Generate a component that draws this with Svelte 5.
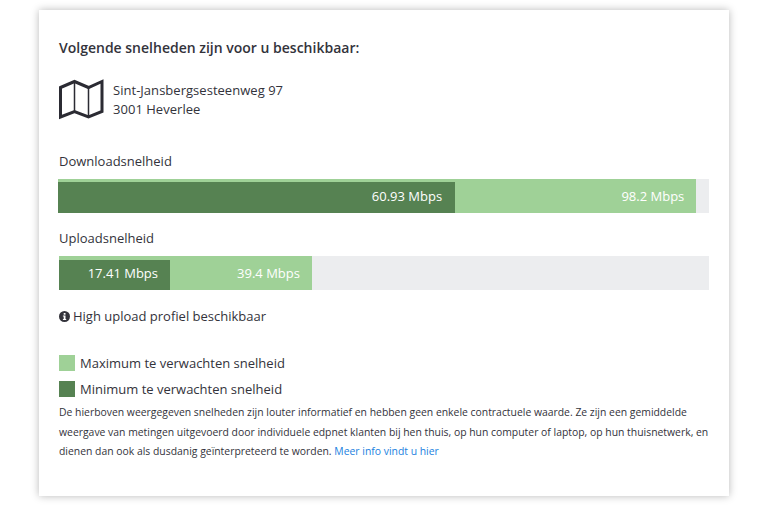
<script>
  const bars = [
    { label: 'Downloadsnelheid', cls: 'dl', max: 98.05, min: 61.0, maxText: '98.2 Mbps', minText: '60.93 Mbps' },
    { label: 'Uploadsnelheid', cls: 'ul', max: 38.92, min: 17.08, maxText: '39.4 Mbps', minText: '17.41 Mbps' }
  ];
</script>

<div class="page">
  <section class="card">
    <h2>Volgende snelheden zijn voor u beschikbaar:</h2>
    <div class="address">
      <svg class="map" width="46" height="42" viewBox="0 0 46 42" fill="none" stroke="#2b2b33" stroke-width="3" stroke-linejoin="miter">
        <path d="M2.500 8.500 L16.500 2.500 L30.500 8.500 L44 2.500 V32.500 L30.500 38 L16.500 32.500 L2.500 38 Z" />
        <path d="M16.500 2.500 V32.500 M30.500 8.500 V38" stroke-width="1.500" />
      </svg>
      <div class="lines">Sint-Jansbergsesteenweg 97<br />3001 Heverlee</div>
    </div>

    {#each bars as b}
      <div class="label {b.cls}">{b.label}</div>
      <div class="track {b.cls}">
        <div class="max" style="width:{b.max}%">
          <span>{b.maxText}</span>
          <div class="min" style="width:{(b.min / b.max) * 100}%"><span>{b.minText}</span></div>
        </div>
      </div>
    {/each}

    <div class="info">
      <svg width="11" height="11" viewBox="0 0 11 11"><circle cx="5.500" cy="5.500" r="5.500" fill="#33333b" /><rect x="4.700" y="2" width="1.800" height="1.700" fill="#fff" /><path d="M3.900 4.500 H6.500 V8 H7.200 V9 H3.900 V8 H4.700 V5.500 H3.900 Z" fill="#fff" /></svg>
      <span>High upload profiel beschikbaar</span>
    </div>

    <div class="legend first"><i class="sw light"></i>Maximum te verwachten snelheid</div>
    <div class="legend"><i class="sw dark"></i>Minimum te verwachten snelheid</div>

    <p class="note">De hierboven weergegeven snelheden zijn louter informatief en hebben geen enkele contractuele waarde. Ze zijn een gemiddelde weergave van metingen uitgevoerd door individuele edpnet klanten bij hen thuis, op hun computer of laptop, op hun thuisnetwerk, en dienen dan ook als dusdanig geïnterpreteerd te worden. <a href="#top">Meer info vindt u hier</a></p>
  </section>
</div>

<style>
  :global(body) { margin: 0; background: #fff; }
  .page { padding: 10px 39px 11px; font-family: "Open Sans", sans-serif; color: #33333b; }
  .card { box-sizing: border-box; height: 486px; padding: 28px 20px 0; background: #fff; box-shadow: 0 0 8px rgba(0,0,0,.28); }
  h2 { margin: 0; font-size: 14px; line-height: 19px; font-weight: 600; }
  .address { display: flex; align-items: center; gap: 9px; margin-top: 22px; }
  .map { display: block; margin-left: -1px; }
  .lines { font-size: 13px; line-height: 19px; letter-spacing: .03px; }
  .label { font-size: 13px; line-height: 18px; }
  .label.dl { margin-top: 31px; }
  .label.ul { margin-top: 16px; }
  .track { height: 34px; margin-top: 9px; background: #ecedef; color: #fff; font-size: 13px; }
  .track.dl { margin-left: -1px; }
  .max { position: relative; box-sizing: border-box; height: 100%; background: #9fd197; display: flex; align-items: center; justify-content: flex-end; padding-right: 12px; }
  .min { position: absolute; left: 0; bottom: 0; box-sizing: border-box; background: #568252; display: flex; align-items: center; justify-content: flex-end; padding-right: 12px; }
  .min span { position: relative; top: -2px; }
  .dl .min { height: 31px; padding-right: 13px; }
  .ul .min { height: 30px; }
  .info { display: flex; align-items: center; gap: 3px; margin-top: 17px; font-size: 13px; line-height: 18px; }
  .legend { display: flex; align-items: center; gap: 5px; font-size: 13px; line-height: 16px; height: 16px; margin-top: 10px; color: #33333b; }
  .legend.first { margin-top: 30px; }
  .sw { display: block; width: 16px; height: 16px; }
  .light { background: #9fd197; }
  .dark { background: #568252; }
  .note { margin: 6px 0 0; font-size: 10.400px; line-height: 19.500px; color: #33333b; }
  a { color: #1a7fe0; text-decoration: none; }
</style>
